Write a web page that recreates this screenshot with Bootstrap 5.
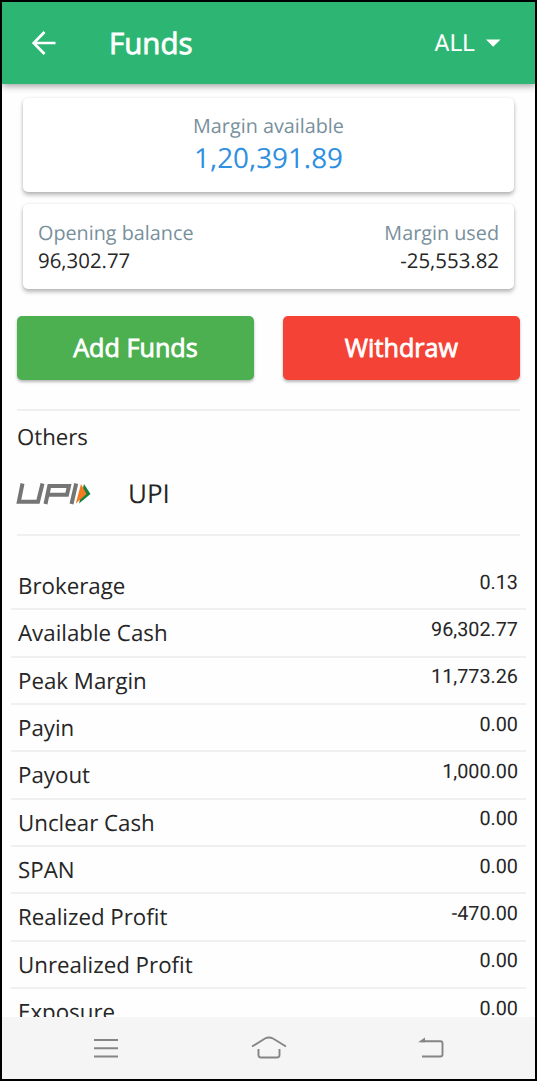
<!DOCTYPE html>
<html lang="en">
<head>
<meta charset="utf-8">
<meta name="viewport" content="width=device-width, initial-scale=1">
<title>Funds</title>
<link href="https://cdn.jsdelivr.net/npm/bootstrap@5.3.0/dist/css/bootstrap.min.css" rel="stylesheet">
<style>
  body { font-family: "Open Sans", sans-serif; color: #262626; background: #fff; }
  .phone { height: 1081px; border: 2px solid #000; background: #fefefe; text-rendering: geometricPrecision; }
  .appbar { height: 82px; flex: none; background: #2db673; color: #fff; padding: 0 32px 0 28px; box-shadow: 0 2px 7px rgba(0,0,0,.38); z-index: 1; }
  .title { font-size: 29.5px; margin: 0 0 0 51px; line-height: 1; -webkit-text-stroke: .8px #fff; }
  .segment { font: 23.5px/1 Roboto, sans-serif; padding-top: 2px; }
  .panel { border: 0; border-radius: 5px; margin: 0 21px; line-height: 28px; box-shadow: 0 3px 4px rgba(0,0,0,.27), 0 0 3px rgba(0,0,0,.08); }
  .panel-total { height: 94px; margin-top: 14px; padding-top: 14px; }
  .panel-split { height: 85px; margin-top: 12px; padding: 15px 15px 0; }
  .caption { font-size: 19.8px; color: #78909c; }
  .total { font-size: 27.8px; line-height: 37px; color: #2f8fe0; }
  .amount { font-size: 20.4px; line-height: 26px; }
  .actions { padding: 0 15px; gap: 29px; margin-top: 27px; }
  .action { height: 63.5px; border: 0; border-radius: 5px; font-size: 25.2px; padding: 1px 0 0; color: #fff; -webkit-text-stroke: .8px #fff; box-shadow: 0 2px 3px rgba(0,0,0,.28); }
  .add { background: #4caf50; }
  .withdraw { background: #f44336; }
  .others { margin: 29.5px 15px 0; height: 127px; border-top: 2px solid #f0f0f0; border-bottom: 2px solid #f0f0f0; font-size: 22.2px; line-height: 30px; padding-top: 11px; }
  .upi-row { margin-top: 25px; font-size: 26px; line-height: 34px; gap: 35px; }
  .upi-row svg { margin-left: -1px; }
  .upi-row span { margin: -1px 0 0 1px; }
  .ledger { margin: 26px 9px 0; flex: 1 1 0; min-height: 0; }
  .entry { height: 47.35px; border-bottom: 2px solid #f0f0f0; padding: 0 8px 0 7px; font-size: 22.3px; line-height: 30px; }
  .entry:first-child { height: 48.35px; padding-top: 1px; }
  .entry-name { padding-top: 8px; }
  .entry-value { font: 19.8px/24px Roboto, sans-serif; padding-top: 7.6px; }
  .sysbar { height: 62px; flex: none; background: #f5f5f5; }
</style>
</head>
<body>
<div class="phone d-flex flex-column overflow-hidden">
  <header class="appbar d-flex align-items-center">
    <svg width="28" height="28" viewBox="0 0 28 28" fill="none" stroke="#fff" stroke-width="2.7"><path d="M25.5 14H4M14.5 3L3.700 14L14.500 25"/></svg>
    <div class="title">Funds</div>
    <div class="segment ms-auto">ALL</div>
    <svg class="ms-2" width="20" height="10" viewBox="0 0 20 10"><path d="M3 1.500H17.500L10.200 8.800Z" fill="#fff"/></svg>
  </header>

  <section class="card panel panel-total text-center">
    <div class="caption">Margin available</div>
    <div class="total">1,20,391.89</div>
  </section>
  <section class="card panel panel-split flex-row justify-content-between">
    <div><div class="caption">Opening balance</div><div class="amount">96,302.77</div></div>
    <div class="text-end"><div class="caption">Margin used</div><div class="amount">-25,553.82</div></div>
  </section>

  <div class="actions d-flex">
    <button class="btn action add flex-fill w-50">Add Funds</button>
    <button class="btn action withdraw flex-fill w-50">Withdraw</button>
  </div>

  <section class="others">
    <div>Others</div>
    <div class="upi-row d-flex align-items-center">
      <svg width="76" height="24" viewBox="0 0 75 24">
        <g fill="none" stroke="#757575" stroke-width="4">
          <path d="M6 1.500L2.300 19.800H21.500L26 1.500"/>
          <path d="M29 22L32.800 4H52.500L50.500 12.800H32.500"/>
          <path d="M59.700 1.500L55 22"/>
        </g>
        <path d="M67.500 2L74 12L62.500 21.500Z" fill="#16813f"/>
        <path d="M64.500 2L70 12L59.300 21.500Z" fill="#f47b20"/>
      </svg>
      <span>UPI</span>
    </div>
  </section>

  <main class="ledger overflow-hidden">
    <div class="entry d-flex justify-content-between"><span class="entry-name">Brokerage</span><span class="entry-value">0.13</span></div>
    <div class="entry d-flex justify-content-between"><span class="entry-name">Available Cash</span><span class="entry-value">96,302.77</span></div>
    <div class="entry d-flex justify-content-between"><span class="entry-name">Peak Margin</span><span class="entry-value">11,773.26</span></div>
    <div class="entry d-flex justify-content-between"><span class="entry-name">Payin</span><span class="entry-value">0.00</span></div>
    <div class="entry d-flex justify-content-between"><span class="entry-name">Payout</span><span class="entry-value">1,000.00</span></div>
    <div class="entry d-flex justify-content-between"><span class="entry-name">Unclear Cash</span><span class="entry-value">0.00</span></div>
    <div class="entry d-flex justify-content-between"><span class="entry-name">SPAN</span><span class="entry-value">0.00</span></div>
    <div class="entry d-flex justify-content-between"><span class="entry-name">Realized Profit</span><span class="entry-value">-470.00</span></div>
    <div class="entry d-flex justify-content-between"><span class="entry-name">Unrealized Profit</span><span class="entry-value">0.00</span></div>
    <div class="entry d-flex justify-content-between"><span class="entry-name">Exposure</span><span class="entry-value">0.00</span></div>
  </main>

  <nav class="sysbar">
    <svg class="d-block" width="533" height="62" viewBox="2 1017 533 62" fill="none" stroke="#858585" stroke-width="1.900" stroke-linejoin="round">
      <path d="M94 1040H118M94 1048.300H118M94 1056.500H118"/>
      <path d="M252 1046.500L265 1038.500Q269 1036.500 273 1038.500L286 1046.500M258.500 1049V1055Q258.500 1057.500 261 1057.500H277Q279.500 1057.500 279.500 1055V1049"/>
      <path d="M422 1056.500H440.500Q442.500 1056.500 442.500 1054.500V1043.200Q442.500 1041.200 440.500 1041.200H421"/>
      <path d="M418 1042.200L425 1037.500V1042.200Z" fill="#858585" stroke="none"/>
    </svg>
  </nav>
</div>
<script src="https://cdn.jsdelivr.net/npm/bootstrap@5.3.0/dist/js/bootstrap.bundle.min.js"></script>
</body>
</html>
